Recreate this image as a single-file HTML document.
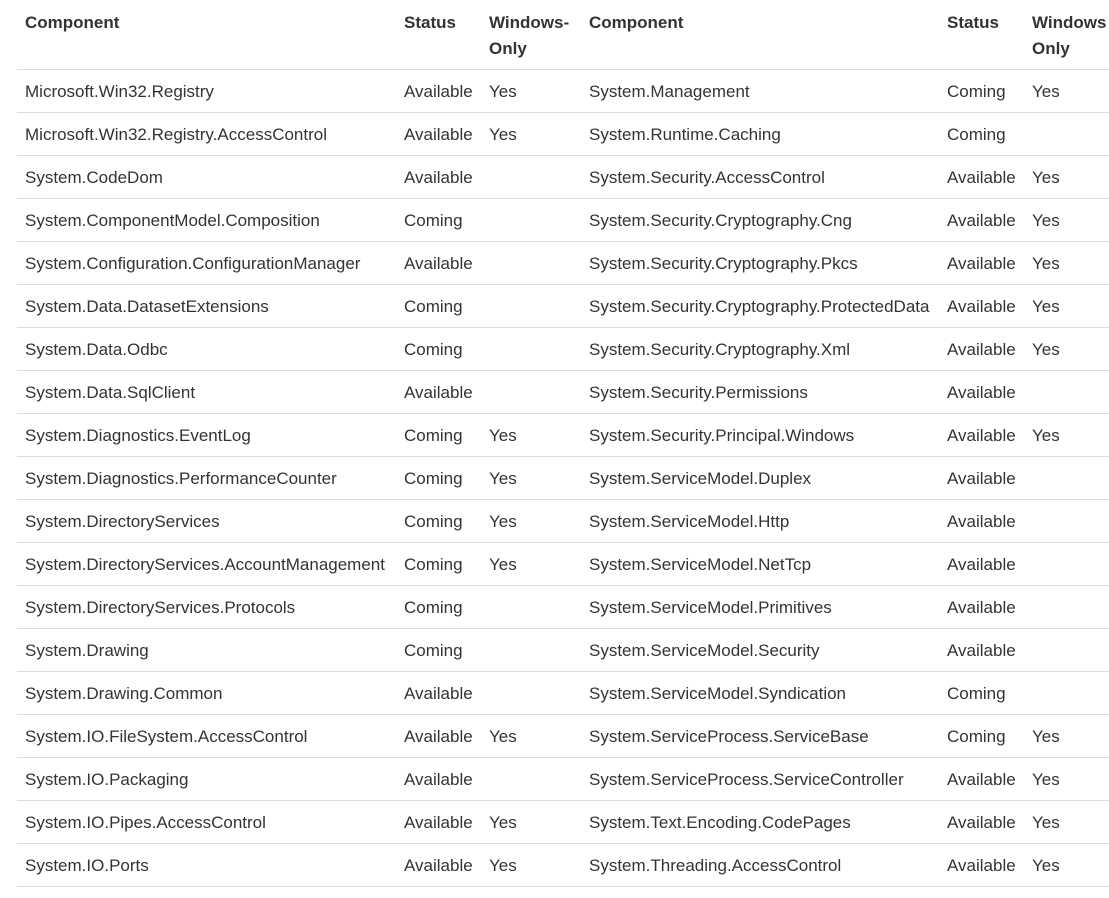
<!DOCTYPE html>
<html><head><style>
body{margin:0;background:#fff;width:1109px;height:898px;overflow:hidden;font-family:"Segoe UI","Liberation Sans",sans-serif;color:#333;}
table{position:absolute;left:17px;top:0;border-collapse:collapse;table-layout:fixed;width:1092px;font-size:17px;}
th{font-weight:bold;text-align:left;vertical-align:top;padding:10px 8px 0 8px;line-height:26px;border-bottom:1px solid #ddd;box-sizing:border-box;}
td{padding:3px 8px 0 8px;height:43px;box-sizing:border-box;border-bottom:1px solid #ddd;white-space:nowrap;overflow:hidden;vertical-align:middle;}
</style></head><body>
<table>
<colgroup><col style="width:379px"><col style="width:85px"><col style="width:100px"><col style="width:358px"><col style="width:85px"><col style="width:85px"></colgroup>
<tr style="height:69px"><th style="height:69px">Component</th><th style="height:69px">Status</th><th style="height:69px">Windows-<br>Only</th><th style="height:69px">Component</th><th style="height:69px">Status</th><th style="height:69px">Windows<br>Only</th></tr>
<tr><td>Microsoft.Win32.Registry</td><td>Available</td><td>Yes</td><td>System.Management</td><td>Coming</td><td>Yes</td></tr>
<tr><td>Microsoft.Win32.Registry.AccessControl</td><td>Available</td><td>Yes</td><td>System.Runtime.Caching</td><td>Coming</td><td></td></tr>
<tr><td>System.CodeDom</td><td>Available</td><td></td><td>System.Security.AccessControl</td><td>Available</td><td>Yes</td></tr>
<tr><td>System.ComponentModel.Composition</td><td>Coming</td><td></td><td>System.Security.Cryptography.Cng</td><td>Available</td><td>Yes</td></tr>
<tr><td>System.Configuration.ConfigurationManager</td><td>Available</td><td></td><td>System.Security.Cryptography.Pkcs</td><td>Available</td><td>Yes</td></tr>
<tr><td>System.Data.DatasetExtensions</td><td>Coming</td><td></td><td>System.Security.Cryptography.ProtectedData</td><td>Available</td><td>Yes</td></tr>
<tr><td>System.Data.Odbc</td><td>Coming</td><td></td><td>System.Security.Cryptography.Xml</td><td>Available</td><td>Yes</td></tr>
<tr><td>System.Data.SqlClient</td><td>Available</td><td></td><td>System.Security.Permissions</td><td>Available</td><td></td></tr>
<tr><td>System.Diagnostics.EventLog</td><td>Coming</td><td>Yes</td><td>System.Security.Principal.Windows</td><td>Available</td><td>Yes</td></tr>
<tr><td>System.Diagnostics.PerformanceCounter</td><td>Coming</td><td>Yes</td><td>System.ServiceModel.Duplex</td><td>Available</td><td></td></tr>
<tr><td>System.DirectoryServices</td><td>Coming</td><td>Yes</td><td>System.ServiceModel.Http</td><td>Available</td><td></td></tr>
<tr><td>System.DirectoryServices.AccountManagement</td><td>Coming</td><td>Yes</td><td>System.ServiceModel.NetTcp</td><td>Available</td><td></td></tr>
<tr><td>System.DirectoryServices.Protocols</td><td>Coming</td><td></td><td>System.ServiceModel.Primitives</td><td>Available</td><td></td></tr>
<tr><td>System.Drawing</td><td>Coming</td><td></td><td>System.ServiceModel.Security</td><td>Available</td><td></td></tr>
<tr><td>System.Drawing.Common</td><td>Available</td><td></td><td>System.ServiceModel.Syndication</td><td>Coming</td><td></td></tr>
<tr><td>System.IO.FileSystem.AccessControl</td><td>Available</td><td>Yes</td><td>System.ServiceProcess.ServiceBase</td><td>Coming</td><td>Yes</td></tr>
<tr><td>System.IO.Packaging</td><td>Available</td><td></td><td>System.ServiceProcess.ServiceController</td><td>Available</td><td>Yes</td></tr>
<tr><td>System.IO.Pipes.AccessControl</td><td>Available</td><td>Yes</td><td>System.Text.Encoding.CodePages</td><td>Available</td><td>Yes</td></tr>
<tr><td>System.IO.Ports</td><td>Available</td><td>Yes</td><td>System.Threading.AccessControl</td><td>Available</td><td>Yes</td></tr>
</table>
</body></html>
